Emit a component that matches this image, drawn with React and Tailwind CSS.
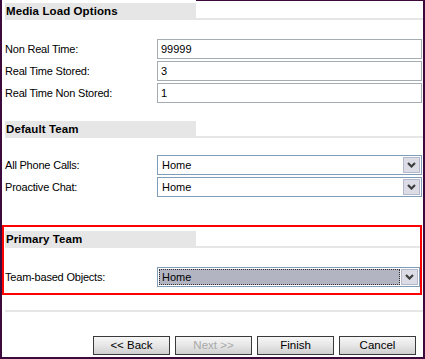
import React from "react";

const font = { fontFamily: '"Liberation Sans", Arial, sans-serif' };

function Header({ title }) {
  return (
    <div className="flex items-end h-[17px]">
      <div className="w-[191px] h-[17px] bg-[#e6e6e6] flex items-center pl-[1px]">
        <span className="text-[11.5px] font-bold text-black leading-none tracking-[0.1px]">{title}</span>
      </div>
      <div className="flex-1 h-[2px] bg-[#e6e6e6]" />
    </div>
  );
}

function Row({ label, children }) {
  return (
    <div className="flex items-center h-[20px]">
      <div className="w-[152px] text-[11px] text-black tracking-[-0.2px]">{label}</div>
      <div className="flex-1 h-full">{children}</div>
    </div>
  );
}

function TextInput({ value }) {
  return (
    <div className="h-full border border-[#a5acb2] bg-white flex items-center pl-[3px] text-[11px] text-black">
      {value}
    </div>
  );
}

function Chevron() {
  return (
    <svg width="9" height="6" viewBox="0 0 9 6">
      <path d="M1 1 L4.5 4.5 L8 1" fill="none" stroke="#3e3e3e" strokeWidth="2.2" />
    </svg>
  );
}

function Select({ value, focused }) {
  return (
    <div className="h-full border border-[#7f9db9] bg-white flex items-stretch">
      <div className="flex-1 flex items-stretch p-[1px]">
        {focused ? (
          <div className="flex-1 bg-[#b2b4c2] border border-dotted border-[#333] flex items-center pl-[2px] text-[11px] text-black">
            {value}
          </div>
        ) : (
          <div className="flex-1 flex items-center pl-[3px] text-[11px] text-black">{value}</div>
        )}
      </div>
      <div className="w-[17px] m-[1px] ml-0 bg-[#dcdce6] border border-[#b4b8c8] flex items-center justify-center">
        <Chevron />
      </div>
    </div>
  );
}

function Button({ label, disabled }) {
  return (
    <div
      className={
        "w-[77px] h-[19px] border border-[#3a3a3a] bg-gradient-to-b from-[#f6f6f6] via-[#e6e6e6] to-[#cfcfcf] flex items-center justify-center text-[11.5px] " +
        (disabled ? "text-[#a8a8a8]" : "text-black")
      }
    >
      {label}
    </div>
  );
}

export default function App() {
  return (
    <div style={font} className="w-[425px] h-[359px] bg-white flex flex-col border-l-2 border-r-2 border-b-2 border-[#3c0a3c] overflow-hidden">
      <div className="flex h-[1px]">
        <div className="w-[194px]" />
        <div className="flex-1 bg-[#3c0a3c]" />
      </div>
      <div className="pl-[3px] pt-[2px]">
        <Header title="Media Load Options" />
        <div className="pr-[1px] mt-[19px] flex flex-col gap-[2px]">
          <Row label="Non Real Time:"><TextInput value="99999" /></Row>
          <Row label="Real Time Stored:"><TextInput value="3" /></Row>
          <Row label="Real Time Non Stored:"><TextInput value="1" /></Row>
        </div>
        <div className="mt-[18px]">
          <Header title="Default Team" />
        </div>
        <div className="pr-[1px] mt-[17px] flex flex-col gap-[2px]">
          <Row label="All Phone Calls:"><Select value="Home" /></Row>
          <Row label="Proactive Chat:"><Select value="Home" /></Row>
        </div>
      </div>
      <div className="mt-[28px] mr-[1px] border-2 border-[#ff0000] pl-[1px] pt-[4px] h-[70px]">
        <Header title="Primary Team" />
        <div className="mt-[19px]">
          <Row label="Team-based Objects:"><Select value="Home" focused /></Row>
        </div>
      </div>
      <div className="mt-[15px] ml-[3px] h-[2px] bg-[#e6e6e6]" />
      <div className="mt-[24px] flex justify-end gap-[5px] pr-[7px]">
        <Button label="<< Back" />
        <Button label="Next >>" disabled />
        <Button label="Finish" />
        <Button label="Cancel" />
      </div>
    </div>
  );
}
